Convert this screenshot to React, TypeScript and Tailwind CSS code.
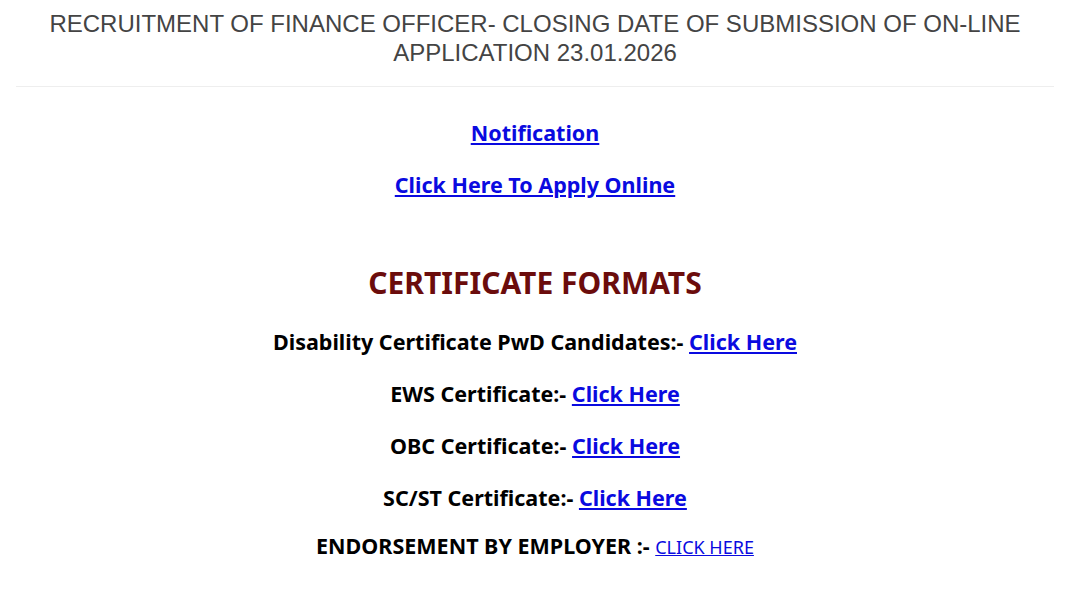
export default function App() {
  const rows = [
    { label: "Disability Certificate PwD Candidates:-" },
    { label: "EWS Certificate:-" },
    { label: "OBC Certificate:-" },
    { label: "SC/ST Certificate:-" },
  ];

  return (
    <div className="min-h-[595px] bg-white px-4">
      <h3 className="pt-[9px] text-center font-['Liberation_Sans',Arial,sans-serif] text-[24px] leading-[29px] text-[#444]">
        RECRUITMENT OF FINANCE OFFICER- CLOSING DATE OF SUBMISSION OF ON-LINE
        <br />
        APPLICATION 23.01.2026
      </h3>
      <hr className="mt-[19px] border-t border-[#eee]" />

      <div className="flex flex-col items-center font-['Noto_Sans','Open_Sans',sans-serif] font-bold text-black">
        <p className="mt-[30px] text-[21.5px] leading-[32px]">
          <a href="#" className="text-[#0a0ae0] underline">
            Notification
          </a>
        </p>
        <p className="mt-[20px] text-[21.5px] leading-[32px]">
          <a href="#" className="text-[#0a0ae0] underline">
            Click Here To Apply Online
          </a>
        </p>

        <h2 className="mt-[62px] text-[30px] leading-[40px] text-[#6b0c0c]">
          CERTIFICATE FORMATS
        </h2>

        {rows.map((row, i) => (
          <p
            key={row.label}
            className={`${i === 0 ? "mt-[23px]" : "mt-[20px]"} text-[21.5px] leading-[32px]`}
          >
            {row.label}{" "}
            <a href="#" className="text-[#0a0ae0] underline">
              Click Here
            </a>
          </p>
        ))}

        <p className="mt-[16px] text-[21.5px] leading-[32px]">
          ENDORSEMENT BY EMPLOYER :-{" "}
          <a href="#" className="text-[18px] font-normal text-[#0a0ae0] underline">
            CLICK HERE
          </a>
        </p>
      </div>
    </div>
  );
}
